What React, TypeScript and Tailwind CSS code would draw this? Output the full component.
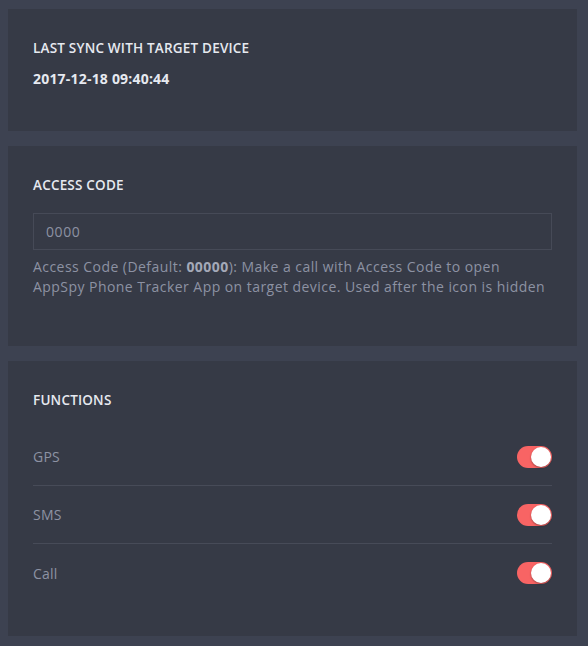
import React from "react";

const font = { fontFamily: '"Open Sans", "Noto Sans", sans-serif' };

function Toggle() {
  return (
    <div className="relative w-[35px] h-[22px] rounded-full bg-[#f86464] shrink-0">
      <div className="absolute right-[1px] top-[1px] w-[20px] h-[20px] rounded-full bg-white shadow-[0_1px_2px_rgba(0,0,0,0.35)]" />
    </div>
  );
}

function Row({ label, last }: { label: string; last?: boolean }) {
  return (
    <div
      className={`flex items-center justify-between h-[58px] ${last ? "" : "border-b border-[#474b58]"}`}
    >
      <span className="text-[14px] tracking-[0.2px] text-[#8d92a3]">{label}</span>
      <Toggle />
    </div>
  );
}

export default function App() {
  return (
    <div
      className="w-[588px] h-[646px] bg-[#3d4251] pt-[9px] pl-[8px] pr-[11px] flex flex-col gap-[15px]"
      style={font}
    >
      <div className="bg-[#363a46] h-[122px] px-[25px] pt-[29px]">
        <div className="text-[13.5px] tracking-[0.2px] leading-[20px] font-semibold text-[#e6e9f0]">
          LAST SYNC WITH TARGET DEVICE
        </div>
        <div className="mt-[11px] text-[14px] tracking-[0.2px] leading-[20px] font-bold text-[#e6e9f0]">
          2017-12-18 09:40:44
        </div>
      </div>

      <div className="bg-[#363a46] h-[200px] px-[25px] pt-[29px]">
        <div className="text-[13.5px] tracking-[0.2px] leading-[20px] font-semibold text-[#e6e9f0]">
          ACCESS CODE
        </div>
        <div className="mt-[18px] h-[37px] border border-[#464a57] flex items-center px-[12px] text-[14px] tracking-[0.6px] text-[#8d92a3]">
          0000
        </div>
        <p className="mt-[7px] text-[14px] tracking-[0.45px] leading-[20px] text-[#8d92a3] whitespace-nowrap">
          Access Code (Default: <b className="font-bold text-[#a4a9b8]">00000</b>): Make a call with Access Code to open
          <br />
          AppSpy Phone Tracker App on target device. Used after the icon is hidden
        </p>
      </div>

      <div className="bg-[#363a46] h-[275px] px-[25px] pt-[29px]">
        <div className="text-[13.5px] tracking-[0.2px] leading-[20px] font-semibold text-[#e6e9f0]">
          FUNCTIONS
        </div>
        <div className="mt-[18px] flex flex-col">
          <Row label="GPS" />
          <Row label="SMS" />
          <Row label="Call" last />
        </div>
      </div>
    </div>
  );
}
